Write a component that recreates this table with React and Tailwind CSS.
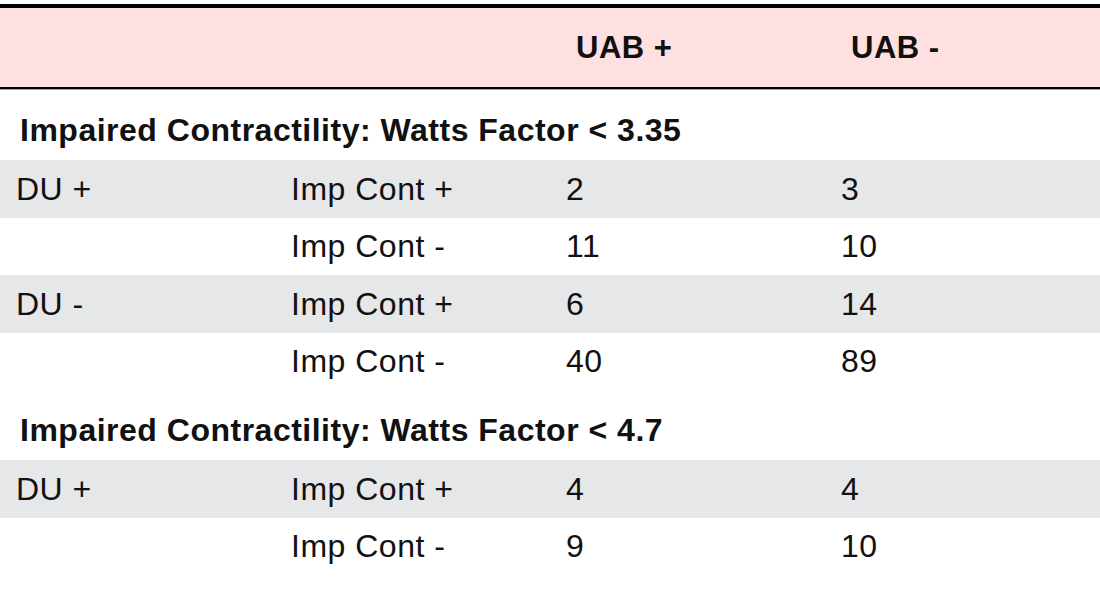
import React from "react";

const sections = [
  {
    title: "Impaired Contractility: Watts Factor < 3.35",
    rows: [
      ["DU +", "Imp Cont +", "2", "3"],
      ["", "Imp Cont -", "11", "10"],
      ["DU -", "Imp Cont +", "6", "14"],
      ["", "Imp Cont -", "40", "89"],
    ],
  },
  {
    title: "Impaired Contractility: Watts Factor < 4.7",
    rows: [
      ["DU +", "Imp Cont +", "4", "4"],
      ["", "Imp Cont -", "9", "10"],
    ],
  },
];

const App = () => {
  return (
    <div
      className="w-[1100px] h-[606px] bg-white text-[#111] overflow-hidden pt-1 tracking-[0.5px]"
      style={{ fontFamily: '"Liberation Sans", Arial, sans-serif' }}
    >
      {/* Header */}
      <div className="grid grid-cols-4 h-[85px] bg-[#fee0e1] border-t-4 border-b-2 border-black items-center">
        <div />
        <div />
        <div className="pl-[26px] text-[31px] font-bold leading-[36px]">UAB +</div>
        <div className="pl-[26px] text-[31px] font-bold leading-[36px]">UAB -</div>
      </div>
      <div className="h-px bg-gray-400" />

      {sections.map((section) => (
        <div key={section.title}>
          <div className="pl-5 pt-[22px] pb-[12px] text-[32px] font-bold leading-[36px]">
            {section.title}
          </div>
          {section.rows.map((row, i) => (
            <div
              key={i}
              className={`grid grid-cols-4 h-[57.5px] items-center text-[32px] leading-[36px] ${
                i % 2 === 0 ? "bg-[#e6e7e8]" : "bg-white"
              }`}
            >
              {row.map((cell, j) => (
                <div key={j} className="pl-4">
                  {cell}
                </div>
              ))}
            </div>
          ))}
        </div>
      ))}
    </div>
  );
};

export default App;
